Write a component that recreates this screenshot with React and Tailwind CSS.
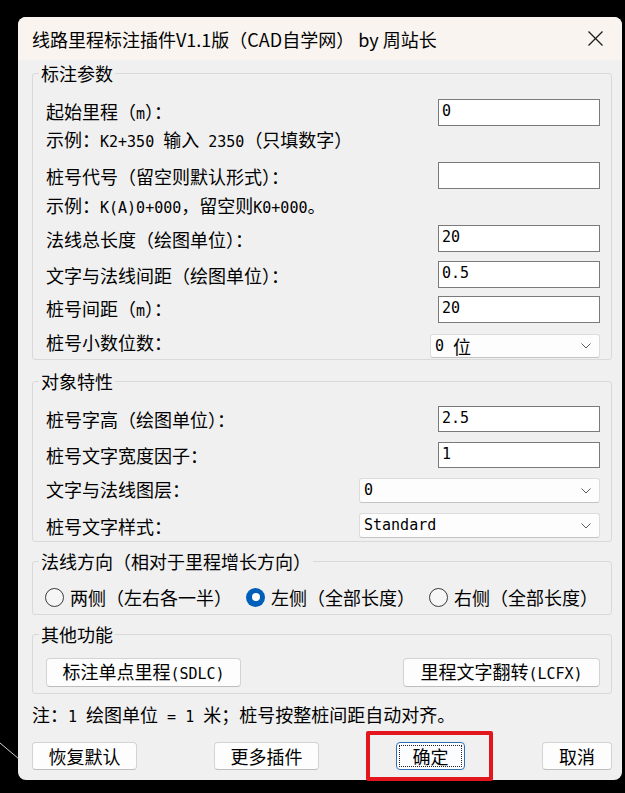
import React from "react";

const CJK = "font-['Noto_Sans_CJK_SC','Noto_Sans_CJK_JP',sans-serif]";
const MONO = "font-['DejaVu_Sans_Mono','Liberation_Mono',monospace]";

function M({ children }) {
  return <span className={`${MONO} text-[15px]`}>{children}</span>;
}

function Input({ v, h = "h-[27px]" }) {
  return (
    <div className={`w-[162px] ${h} bg-white border border-[#7a7a7a] flex items-center pl-[3px] pb-[2px] ${MONO} text-[15px] text-black`}>
      {v}
    </div>
  );
}

function Chevron() {
  return (
    <svg width="10" height="6" viewBox="0 0 10 6" className="shrink-0">
      <polyline points="0.5,0.5 5,5 9.5,0.5" fill="none" stroke="#5a5a5a" strokeWidth="1" />
    </svg>
  );
}

function Select({ w, h, children }) {
  return (
    <div className={`${w} ${h} bg-[#fdfdfd] border border-[#dcdcdc] border-b-[#c4c4c4] rounded-[3px] flex items-center justify-between pl-[4px] pr-[8px]`}>
      <div className="flex items-center">{children}</div>
      <Chevron />
    </div>
  );
}

function Row({ label, children, mt = "", labelCls = "" }) {
  return (
    <div className={`flex items-center justify-between ${mt}`}>
      <span className={`leading-[24px] whitespace-nowrap ${labelCls}`}>{label}</span>
      {children}
    </div>
  );
}

function Group({ title, mt, cls, children }) {
  return (
    <div className={`relative ${mt} border border-[#d9d9d9] rounded-[3px] ${cls}`}>
      <span className="absolute -top-[13px] left-[6px] px-[2px] leading-[24px] bg-[#f0f0f0] whitespace-nowrap">
        {title}
      </span>
      {children}
    </div>
  );
}

function Btn({ w, h, children, extra = "" }) {
  return (
    <div className={`${w} ${h} bg-[#fdfdfd] border border-[#d3d3d3] border-b-[#bdbdbd] rounded-[4px] flex items-center justify-center whitespace-nowrap leading-[22px] ${extra}`}>
      {children}
    </div>
  );
}

function Radio({ checked, label }) {
  return (
    <div className="flex items-center">
      {checked ? (
        <span className="w-[19px] h-[19px] rounded-full bg-[#005fb8] flex items-center justify-center">
          <span className="w-[8px] h-[8px] rounded-full bg-white" />
        </span>
      ) : (
        <span className="w-[19px] h-[19px] rounded-full border border-[#3a3a3a] bg-[#f6f6f6]" />
      )}
      <span className="ml-[6px] leading-[24px] whitespace-nowrap">{label}</span>
    </div>
  );
}

export default function App() {
  return (
    <div className={`relative w-[625px] h-[793px] bg-black overflow-hidden pl-[18px] pt-[17px] ${CJK} text-[18px] text-black`}>
      <svg className="absolute left-0 top-[740px]" width="22" height="22" viewBox="0 0 22 22">
        <line x1="0" y1="3" x2="19" y2="19" stroke="#cfcfcf" strokeWidth="1" />
      </svg>

      <div className="w-[604px] h-[763px] rounded-[8px] overflow-hidden bg-[#f0f0f0] flex flex-col">
        {/* title bar */}
        <div className="h-[43px] shrink-0 bg-[#f9f4f0] flex items-center justify-between pl-[14px] pr-[19px]">
          <span className="leading-[24px] whitespace-nowrap">线路里程标注插件V1.1版（CAD自学网） by 周站长</span>
          <svg width="15" height="15" viewBox="0 0 15 15">
            <line x1="0.5" y1="0.5" x2="14.5" y2="14.5" stroke="#1c1c1c" strokeWidth="1.3" />
            <line x1="14.5" y1="0.5" x2="0.5" y2="14.5" stroke="#1c1c1c" strokeWidth="1.3" />
          </svg>
        </div>

        {/* body */}
        <div className="flex-1 flex flex-col pl-[14px] pr-[10px]">
          <Group title="标注参数" mt="mt-[13px]" cls="pl-[13px] pr-[11px] pt-[25px] pb-[1px] flex flex-col">
            <Row label={<>起始里程（<M>m</M>）：</>}>
              <Input v="0" />
            </Row>
            <div className="mt-[1px] h-[26px] flex items-center leading-[24px] whitespace-nowrap">
              <span>示例：<M>K2+350 </M>输入<M> 2350</M>（只填数字）</span>
            </div>
            <Row label="桩号代号（留空则默认形式）：" mt="mt-[9px]">
              <Input v="" />
            </Row>
            <div className="mt-[4px] h-[26px] flex items-center leading-[24px] whitespace-nowrap">
              <span>示例：<M>K(A)0+000</M>，留空则<M>K0+000</M>。</span>
            </div>
            <Row label="法线总长度（绘图单位）：" mt="mt-[6px]">
              <Input v="20" />
            </Row>
            <Row label="文字与法线间距（绘图单位）：" mt="mt-[9px]">
              <Input v="0.5" />
            </Row>
            <Row label={<>桩号间距（<M>m</M>）：</>} mt="mt-[8px]">
              <Input v="20" />
            </Row>
            <Row label="桩号小数位数：" mt="mt-[11px]" labelCls="-translate-y-[4px]">
              <Select w="w-[170px]" h="h-[24px]">
                <span className={`${MONO} text-[15px]`}>0</span>
                <span className="ml-[9px] leading-[22px]">位</span>
              </Select>
            </Row>
          </Group>

          <Group title="对象特性" mt="mt-[21px]" cls="pl-[13px] pr-[11px] pt-[24px] pb-[3px] flex flex-col">
            <Row label="桩号字高（绘图单位）：">
              <Input v="2.5" h="h-[26px]" />
            </Row>
            <Row label="桩号文字宽度因子：" mt="mt-[10px]">
              <Input v="1" h="h-[26px]" />
            </Row>
            <Row label="文字与法线图层：" mt="mt-[10px]" labelCls="-translate-y-[2px]">
              <Select w="w-[241px]" h="h-[25px]">
                <span className={`${MONO} text-[15px]`}>0</span>
              </Select>
            </Row>
            <Row label="桩号文字样式：" mt="mt-[10px]">
              <Select w="w-[241px]" h="h-[25px]">
                <span className={`${MONO} text-[15px]`}>Standard</span>
              </Select>
            </Row>
          </Group>

          <Group title="法线方向（相对于里程增长方向）" mt="mt-[19px]" cls="pl-[12px] pt-[22px] pb-[4px]">
            <div className="h-[26px] flex items-center gap-[14px]">
              <Radio label="两侧（左右各一半）" />
              <Radio checked label="左侧（全部长度）" />
              <Radio label="右侧（全部长度）" />
            </div>
          </Group>

          <Group title="其他功能" mt="mt-[19px]" cls="pl-[13px] pr-[11px] pt-[23px] pb-[6px] flex justify-between">
            <Btn w="w-[195px]" h="h-[29px]"><span>标注单点里程<M>(SDLC)</M></span></Btn>
            <Btn w="w-[197px]" h="h-[29px]"><span>里程文字翻转<M>(LCFX)</M></span></Btn>
          </Group>

          <div className="mt-[9px] h-[24px] flex items-center leading-[24px] whitespace-nowrap">
            <span>注：<M>1 </M>绘图单位<M> = 1 </M>米；桩号按整桩间距自动对齐。</span>
          </div>

          <div className="mt-[15px] flex justify-between">
            <Btn w="w-[105px]" h="h-[28px]">恢复默认</Btn>
            <Btn w="w-[105px]" h="h-[28px]">更多插件</Btn>
            <div className="w-[69px] h-[28px] rounded-[4px] border border-[#2f6fb5] bg-[#fbfdff] p-[2px]">
              <div className="w-full h-full border border-dotted border-[#222] flex items-center justify-center leading-[22px]">
                确定
              </div>
            </div>
            <Btn w="w-[70px]" h="h-[28px]">取消</Btn>
          </div>
        </div>
      </div>

      {/* red annotation frame */}
      <div className="absolute left-[366px] top-[731px] w-[127px] h-[50px] border-[4px] border-[#e3161d] rounded-[2px]" />
    </div>
  );
}
